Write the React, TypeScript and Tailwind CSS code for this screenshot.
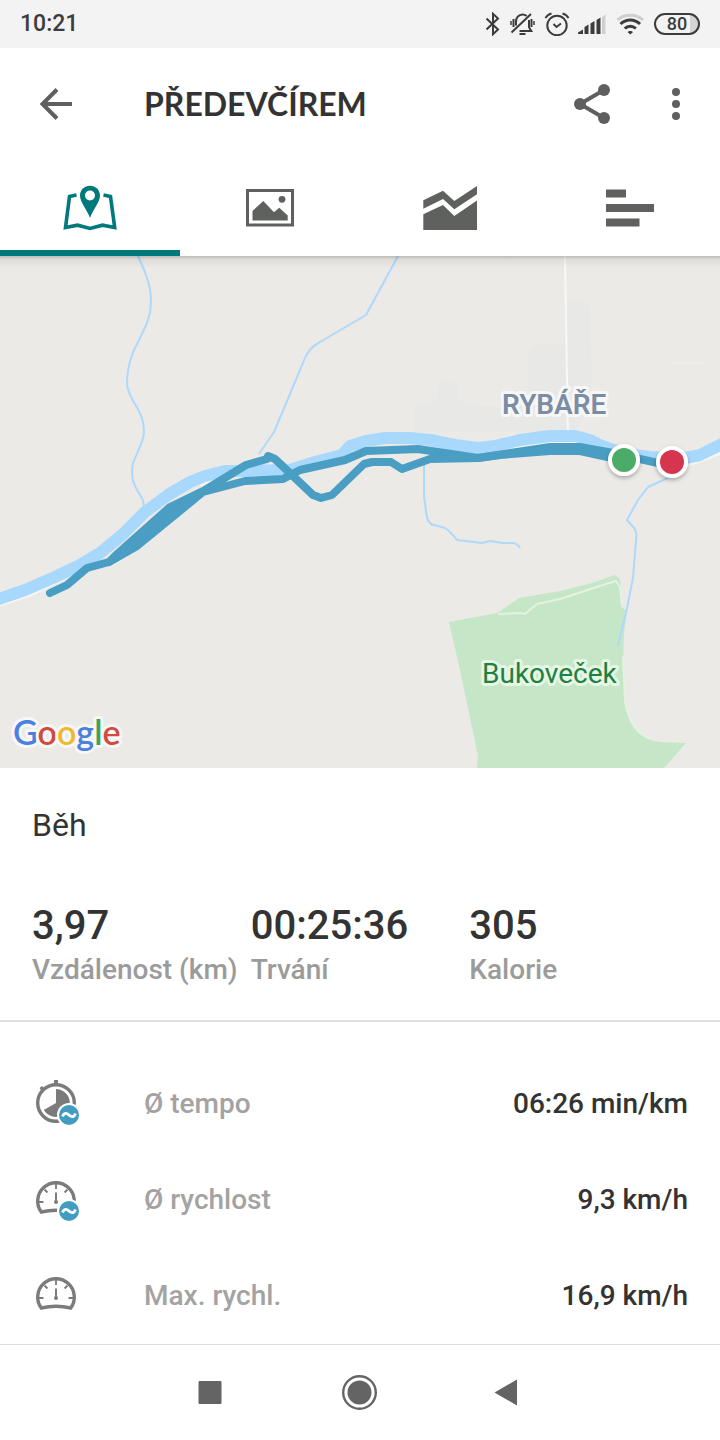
import type { ReactNode } from "react";

const tabs = [
  { id: "map", label: "Mapa" },
  { id: "photos", label: "Fotky" },
  { id: "charts", label: "Grafy" },
  { id: "splits", label: "Mezičasy" },
];

const stats = [
  { value: "3,97", label: "Vzdálenost (km)" },
  { value: "00:25:36", label: "Trvání" },
  { value: "305", label: "Kalorie" },
];

const StatusIcons = () => (
  <div className="flex items-center gap-2 text-[#3c3c3c]">
    {/* bluetooth */}
    <svg width="16" height="24" viewBox="0 0 16 24" fill="none" stroke="currentColor" strokeWidth="2">
      <path d="M0.500 6.500 12 17.500 7 22.200V1.800L12 6.500 0.500 17.500" />
    </svg>
    {/* muted bell */}
    <svg width="26" height="24" viewBox="0 0 26 24" fill="none" stroke="currentColor" strokeWidth="2">
      <path d="M6 13.500V9.500C6 6 8.500 2.500 12.500 2.500c1.500 0 3 .5 4.200 1.500M19 8v7.200l2.300 3.800H9.500" />
      <path d="M1.500 20.500 21 2" />
      <path d="M3.500 7v8M21.500 7v8" strokeWidth="2" />
      <path d="M1 9v4M24 9v4" strokeWidth="1.500" />
      <path d="M9.500 22h6" />
    </svg>
    {/* alarm */}
    <svg width="26" height="24" viewBox="0 0 26 24" fill="none" stroke="currentColor" strokeWidth="2">
      <circle cx="13" cy="13.500" r="9.700" />
      <path d="M9.500 12 12.500 15l4.500-3.500" />
      <path d="M1.500 6.200C2.500 4 4.500 2.200 7.500 1.500M24.500 6.200C23.500 4 21.500 2.200 18.500 1.500" />
    </svg>
    {/* signal */}
    <svg width="30" height="24" viewBox="0 0 30 24" fill="currentColor">
      <path d="M0 22v-1.500l5-3V22zM6.500 22v-7l4-2.500V22zM12.500 22V11.500l4-2.500V22zM18.500 22V8l4-2.500V22z" />
      <path d="M24 22V5l3.500-2.500V22z" fill="#cfcfcf" />
    </svg>
    {/* wifi */}
    <svg width="30" height="24" viewBox="0 0 30 24" fill="none" strokeWidth="3">
      <path d="M1.500 8C8 1.500 20.500 1.500 27 8" stroke="#cfcfcf" />
      <path d="M4.500 12C10 6.500 18.500 6.500 24 12M8.700 16.500c3.200-3 8-3 11.200 0" stroke="currentColor" />
      <path d="M14.300 22.500l-2.800-2.500c1.300-1.500 4.300-1.500 5.600 0z" fill="currentColor" />
    </svg>
    <span className="flex h-[22px] w-[46px] items-center justify-center rounded-full border-2 border-[#3c3c3c] bg-linear-to-r from-[#f3f3f3] from-80% to-[#d4d4d4] to-80% text-[18px] leading-none font-medium">
      80
    </span>
  </div>
);

const TabIcon = ({ id }: { id: string }) => {
  if (id === "map") {
    return (
      <svg width="64" height="64" viewBox="0 0 64 64">
        <path
          d="M18.500 19 11.500 20.500 7.500 51.500 19.500 49.200 32 52.500 44.500 49.200 56.700 51.500 52.500 20.500 45.500 19"
          fill="none"
          stroke="currentColor"
          strokeWidth="3.600"
        />
        <path
          d="M32 9.700c-5.700 0-10 4.400-10 9.800 0 6.500 6.500 13 10 22.500 3.500-9.500 10-16 10-22.500 0-5.400-4.300-9.800-10-9.800zm0 4.800a5 5 0 1 1 0 10 5 5 0 0 1 0-10z"
          fill="currentColor"
          fillRule="evenodd"
        />
      </svg>
    );
  }
  if (id === "photos") {
    return (
      <svg width="64" height="64" viewBox="0 0 64 64" fill="currentColor">
        <rect x="9.500" y="14.500" width="45" height="34.500" fill="none" stroke="currentColor" strokeWidth="3" />
        <path d="M14.500 35 25.300 25 36 36.300 41.300 31.700 49.700 39.500V44.500H14.500z" />
        <circle cx="44" cy="23.300" r="3.400" />
      </svg>
    );
  }
  if (id === "charts") {
    return (
      <svg width="64" height="64" viewBox="0 0 64 64" fill="currentColor">
        <path d="M5.300 24.300 25 14.700 36.300 25 59 10v8.300L36.300 33.300 25 23 5.300 32.700z" />
        <path d="M5.300 38.300 25 29 36.300 40 59 24.500V54H5.300z" />
      </svg>
    );
  }
  return (
    <svg width="64" height="64" viewBox="0 0 64 64" fill="currentColor">
      <path d="M8 13.500h20v8H8zM8 28h48v8H8zM8 42.500h33.500v8H8z" />
    </svg>
  );
};

const AverageBadge = () => (
  <>
    <circle cx="37" cy="35" r="12" fill="#fff" />
    <circle cx="37" cy="35" r="10" fill="#439dc3" />
    <path d="M30.500 36.500c1.500-4 4-4 6.500-1.500s5 2.500 6.500-1.500" fill="none" stroke="#fff" strokeWidth="2.800" />
  </>
);

const StopwatchIcon = () => (
  <svg width="48" height="48" viewBox="0 0 48 48" className="text-[#7b7b7b]">
    <circle cx="24" cy="23" r="18.300" fill="none" stroke="currentColor" strokeWidth="3.400" />
    <path d="M22 0h4v5h-4zM7.500 8 10 6l2.500 2.500L9.500 11z" fill="currentColor" />
    <path d="M24 9a14 14 0 1 1-12.200 21L24 23z" fill="currentColor" />
    <AverageBadge />
  </svg>
);

const GaugeIcon = ({ average }: { average?: boolean }) => (
  <svg width="48" height="48" viewBox="0 0 48 48" className="text-[#7b7b7b]">
    <g fill="none" stroke="currentColor">
      <path d="M9.300 36A18.300 18.300 0 1 1 38.700 36Q24 32.500 9.300 36z" strokeWidth="3.400" />
      <path d="M24 8v5M12.500 13.500l3 3M35.500 13.500l-3 3M7 26h4.500M41 26h-4.500" strokeWidth="1.800" />
      <path d="M24 16.500V26" strokeWidth="2" />
    </g>
    <circle cx="24" cy="26" r="2" fill="currentColor" />
    {average && <AverageBadge />}
  </svg>
);

const metrics: { icon: ReactNode; label: string; value: string }[] = [
  { icon: <StopwatchIcon />, label: "Ø tempo", value: "06:26 min/km" },
  { icon: <GaugeIcon average />, label: "Ø rychlost", value: "9,3 km/h" },
  { icon: <GaugeIcon />, label: "Max. rychl.", value: "16,9 km/h" },
];

const RouteMap = () => (
  <svg viewBox="0 0 720 512" className="block w-full bg-[#ebeae6]" fill="none" strokeLinejoin="round">
    <defs>
      <linearGradient id="edge" x1="0" y1="0" x2="0" y2="1">
        <stop offset="0" stopColor="#000" stopOpacity="0.200" />
        <stop offset="0.300" stopColor="#000" stopOpacity="0.060" />
        <stop offset="1" stopColor="#000" stopOpacity="0" />
      </linearGradient>
      <filter id="markerShadow" x="-50%" y="-50%" width="200%" height="200%">
        <feDropShadow dx="0" dy="2" stdDeviation="2" floodOpacity="0.300" />
      </filter>
    </defs>

    {/* built-up area */}
    <path
      d="M414 176V158Q416 147 430 146L438 142V127L446 124 458 128V144L480 150H520L528 140V100Q532 88 548 88H566V46L580 43 590 48 592 140 576 176z"
      fill="#e8e8e7"
    />
    <path d="M565 0 568 184" stroke="#f8f8f8" strokeWidth="2" />
    <path d="M672 107H705" stroke="#eeeeeb" strokeWidth="2" />

    {/* forest */}
    <path
      d="M449 366 497 357 519 342 560 335 592 327 615 319 620 323 622 347 627 354 624 377 623 411 626 451Q632 483 660 486L686 487 664 512H477L478 500 460 414z"
      fill="#c6e7c7"
    />
    <path
      d="M498 358 521 357 525 358 537 348 560 343 600 330 616 325 620 331 622 350 627 354M623 400 625 445Q630 478 655 484"
      stroke="#e4f2e2"
      strokeWidth="2"
    />

    {/* streams */}
    <g stroke="#aed9fb" strokeWidth="2">
      <path d="M138 0 145 16C149 28 151 34 151 46 151 62 145 72 133 96 129 107 127 118 127 127 127 135 131 141 135 148 141 158 144 165 144 176 144 184 140 190 133 207 130 222 133 228 143 244L144 252" />
      <path d="M398 0 366 59 320 86Q309 92 305 102L290 138 274 176 259 198" />
      <path d="M424 208V240L427 262Q430 269 434 269L445 272Q450 275 457 284L482 287 490 285 503 287 513 287Q518 288 520 292" />
      <path d="M670 221 648 231 638 244 627 264 635 273Q637 278 636 285L633 322 627 352 618 390" />
    </g>

    {/* river */}
    <path
      d="M-4 347 30 336 70 316M200 227 230 221M420 190 480 197 550 186 585 186 620 200M680 209 724 193"
      stroke="#f6f7f5"
      strokeWidth="9"
    />
    <path
      d="M-4 344 25 334 55 321 80 309 100 297 122 279 145 256 168 239 190 226 205 220 225 215 245 215 290 214 315 206 342 199 350 190 366 185 385 182 410 182 430 184 455 189 478 192 495 190 520 184 550 180 575 180 590 184 602 190 625 198 650 201 680 203 700 199 724 187"
      stroke="#a9d8fd"
      strokeWidth="12"
    />

    {/* recorded route */}
    <g stroke="#4a9ec3" strokeWidth="8" strokeLinecap="round">
      <path d="M50 337 67 329 87 312 109 306 137 290 203 236 245 225 283 223 300 214 345 204 366 195 418 193 478 202 550 191 580 191 613 197 658 207 668 206" />
      <path d="M109 306 115 300 170 251 205 234 246 209 267 203 268 200 275 203 313 239 321 242 332 239 364 208 372 206H391L402 213 430 203 478 202 500 199 550 195 580 195 612 202" />
      <path d="M115 302 172 255 195 240 136 286z" fill="#4a9ec3" />
    </g>
    <path d="M660 214 664 218" stroke="#3d5a68" strokeWidth="2" />

    <g filter="url(#markerShadow)">
      <circle cx="624" cy="204" r="16" fill="#fff" />
      <circle cx="672" cy="206" r="16" fill="#fff" />
    </g>
    <circle cx="624" cy="204" r="12" fill="#4bac69" />
    <circle cx="672" cy="206" r="12" fill="#d6354f" />

    {/* labels */}
    <g strokeWidth="6" paintOrder="stroke" fontSize="28">
      <text x="502" y="158" fill="#7b8da5" stroke="#f7f7f7" fontWeight="600">
        RYBÁŘE
      </text>
      <text x="482" y="427" fill="#21803f" stroke="#e5f6e4">
        Bukoveček
      </text>
      <text x="13" y="489" stroke="#f7f7f7" fontSize="34" fontWeight="600" className="font-['Lato',sans-serif]">
        <tspan fill="#4a80e0">G</tspan>
        <tspan fill="#d24b3e">o</tspan>
        <tspan fill="#efb92e">o</tspan>
        <tspan fill="#4a80e0">g</tspan>
        <tspan fill="#3aa457">l</tspan>
        <tspan fill="#d24b3e">e</tspan>
      </text>
    </g>

    <rect width="720" height="12" fill="url(#edge)" />
  </svg>
);

const App = () => {
  return (
    <div className="flex min-h-screen flex-col bg-white font-[Roboto,sans-serif] text-[#333333]">
      {/* status bar */}
      <div className="flex h-12 items-center justify-between bg-[#f3f3f3] px-5">
        <span className="text-[23px] leading-8 font-medium text-[#3c3c3c]">10:21</span>
        <StatusIcons />
      </div>

      {/* app bar */}
      <header className="flex h-28 items-center px-8 text-[#5f5f5f]">
        <button aria-label="Zpět" className="w-28">
          <svg width="48" height="48" viewBox="0 0 48 48" fill="none" stroke="currentColor" strokeWidth="4">
            <path d="M40 24H11M25 9.500 10.500 24 25 38.500" />
          </svg>
        </button>
        <h1 className="flex-1 font-['Lato',sans-serif] text-[32px] leading-10 font-bold text-[#333333]">
          PŘEDEVČÍREM
        </h1>
        <button aria-label="Sdílet" className="mr-12">
          <svg width="48" height="48" viewBox="0 0 48 48" fill="currentColor">
            <path d="M36 10 12 24l24 14" fill="none" stroke="currentColor" strokeWidth="4" />
            <circle cx="36" cy="10" r="6" />
            <circle cx="12" cy="24" r="6" />
            <circle cx="36" cy="38" r="6" />
          </svg>
        </button>
        <button aria-label="Další možnosti">
          <svg width="24" height="48" viewBox="0 0 24 48" fill="currentColor">
            <circle cx="12" cy="12" r="4" />
            <circle cx="12" cy="24" r="4" />
            <circle cx="12" cy="36" r="4" />
          </svg>
        </button>
      </header>

      {/* tabs */}
      <nav className="grid h-24 grid-cols-4">
        {tabs.map((tab, index) => (
          <button
            key={tab.id}
            aria-label={tab.label}
            className={
              index === 0
                ? "flex justify-center border-b-6 border-[#00797d] pt-4 text-[#00797d]"
                : "flex justify-center border-b-6 border-transparent pt-4 text-[#5f615f]"
            }
          >
            <TabIcon id={tab.id} />
          </button>
        ))}
      </nav>

      <main className="flex-1">
        <RouteMap />

        {/* summary */}
        <section className="border-b-2 border-[#e0e0e0] px-8 pt-9 pb-[30px]">
          <h2 className="text-[32px] leading-[42px]">Běh</h2>
          <dl className="mt-14 grid grid-cols-3">
            {stats.map((stat) => (
              <div key={stat.label} className="flex flex-col-reverse">
                <dt className="text-[28px] leading-10 font-medium whitespace-nowrap text-[#9b9b9b]">{stat.label}</dt>
                <dd className="text-[40px] leading-12 font-medium">{stat.value}</dd>
              </div>
            ))}
          </dl>
        </section>

        {/* details */}
        <dl className="px-8 pt-[34px]">
          {metrics.map((metric) => (
            <div key={metric.label} className="flex h-24 items-center text-[28px] leading-10 font-medium">
              <dt className="flex flex-1 items-center text-[#a3a3a3]">
                <span className="w-28">{metric.icon}</span>
                {metric.label}
              </dt>
              <dd>{metric.value}</dd>
            </div>
          ))}
        </dl>
      </main>

      {/* system navigation */}
      <footer className="flex h-24 items-center justify-center gap-[101px] border-t border-[#dedede] text-[#646464]">
        <button aria-label="Poslední aplikace">
          <svg width="48" height="48" viewBox="0 0 48 48" fill="currentColor">
            <rect x="11.500" y="12" width="23" height="23" rx="1" />
          </svg>
        </button>
        <button aria-label="Domů">
          <svg width="48" height="48" viewBox="0 0 48 48" fill="currentColor">
            <circle cx="23.500" cy="23.500" r="16.300" fill="none" stroke="currentColor" strokeWidth="2.400" />
            <circle cx="23.500" cy="23.500" r="12" />
          </svg>
        </button>
        <button aria-label="Zpět">
          <svg width="48" height="48" viewBox="0 0 48 48" fill="currentColor">
            <path d="M9.500 23.500 32 10.500v26z" />
          </svg>
        </button>
      </footer>
    </div>
  );
};

export default App;
